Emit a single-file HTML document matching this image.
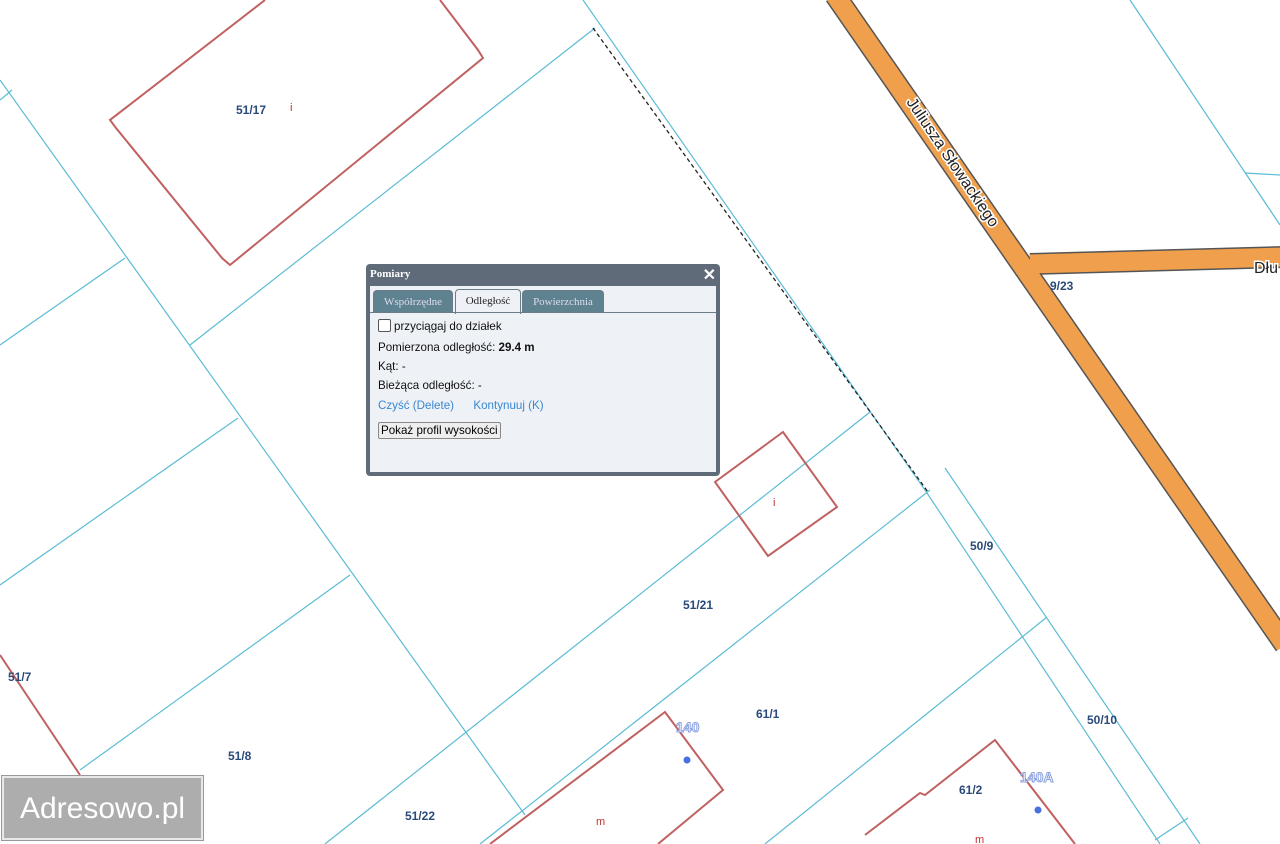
<!DOCTYPE html>
<html><head><meta charset="utf-8"><style>
body{margin:0;width:1280px;height:844px;overflow:hidden;background:#fff;font-family:"Liberation Sans",sans-serif;position:relative}
svg{position:absolute;left:0;top:0}
.lbl{font:bold 12px "Liberation Sans",sans-serif;fill:#2a4a7a}
#dlg{position:absolute;left:366px;top:264px;width:354px;height:212px;background:#5f6b78;border-radius:4px;box-sizing:border-box}
#dlg .t{position:absolute;left:4px;top:4px;color:#fff;font:bold 11px "Liberation Serif",serif}
#dlg .x{position:absolute;right:4px;top:1px;color:#fff;font:bold 16px "Liberation Sans",sans-serif}
#dlg .body{position:absolute;left:4px;top:22px;width:346px;height:186px;background:#eef2f7}
.tab{position:absolute;top:4px;height:22px;border:1px solid #6a7c88;border-bottom:none;border-radius:4px 4px 0 0;font:11px "Liberation Serif",serif;line-height:22px;text-align:center;background:#5f8290;color:#dde}
.tab.a{background:#eef2f7;color:#222;height:24px;top:3px}
.line{position:absolute;left:0;top:26px;width:346px;border-top:1px solid #6a7c88}
.c{position:absolute;left:8px;font-size:11.6px;color:#111}
a{color:#3a86d0;text-decoration:none}
.btn{position:absolute;left:8px;top:136px;border:1px solid #888;background:#eee;font-size:11.6px;padding:1px 2px;border-radius:2px}
#logo{position:absolute;left:2px;top:776px;width:201px;height:64px;background:#adadad;border:2px solid #e8e8e8;box-sizing:border-box;outline:1px solid #999;color:#fff;font:30px "Liberation Sans",sans-serif;line-height:62px;text-align:center}
</style></head><body>
<svg width="1280" height="844" viewBox="0 0 1280 844">
<g stroke="#5bbcd6" stroke-width="1.2" fill="none">
<line x1="0" y1="80" x2="525" y2="815"/>
<line x1="583" y1="0" x2="925" y2="490"/>
<line x1="925" y1="490" x2="1160" y2="844"/>
<line x1="945" y1="468" x2="1200" y2="844"/>
<line x1="190" y1="345" x2="595" y2="28"/>
<line x1="0" y1="345" x2="125" y2="258"/>
<line x1="0" y1="585" x2="238" y2="418"/>
<line x1="80" y1="770" x2="350" y2="575"/>
<line x1="325" y1="844" x2="870" y2="412"/>
<line x1="480" y1="844" x2="930" y2="490"/>
<line x1="765" y1="844" x2="1047" y2="617"/>
<line x1="1155" y1="840" x2="1188" y2="818"/>
<line x1="1130" y1="0" x2="1280" y2="225"/>
<line x1="1245" y1="173" x2="1280" y2="175"/>
<line x1="0" y1="100" x2="12" y2="90"/>
</g>
<line x1="593" y1="28" x2="928" y2="492" stroke="#222" stroke-width="1.3" stroke-dasharray="4,3"/>
<g stroke="#c06060" stroke-width="2" fill="none">
<polyline points="265,0 110,120 116,128 222,258 230,265 483,58 478,50 440,0"/>
<polygon points="715,482 783,432 837,507 768,556"/>
<polyline points="490,844 665,712 723,790 658,844"/>
<polyline points="865,835 920,793 925,795 995,740 1075,844"/>
<line x1="0" y1="655" x2="80" y2="775"/>
</g>
<g stroke="#555" stroke-width="22"><line x1="835" y1="-5" x2="1285" y2="645"/><line x1="1030" y1="264" x2="1285" y2="257"/></g>
<g stroke="#f0a04c" stroke-width="19"><line x1="835" y1="-5" x2="1285" y2="645"/><line x1="1030" y1="264" x2="1285" y2="257"/></g>
<text x="0" y="0" transform="translate(906,102) rotate(56)" font-size="16" fill="#222" stroke="#fff" stroke-width="3" paint-order="stroke">Juliusza Słowackiego</text>
<text x="1254" y="273" font-size="16" fill="#222" stroke="#fff" stroke-width="3" paint-order="stroke">Dłu</text>
<text x="1050" y="290" class="lbl">9/23</text>
<text x="236" y="114" class="lbl">51/17</text>
<text x="290" y="111" font-size="11" fill="#c03030">i</text>
<text x="773" y="506" font-size="11" fill="#c03030">i</text>
<text x="970" y="550" class="lbl">50/9</text>
<text x="683" y="609" class="lbl">51/21</text>
<text x="8" y="681" class="lbl">51/7</text>
<text x="756" y="718" class="lbl">61/1</text>
<text x="1087" y="724" class="lbl">50/10</text>
<text x="228" y="760" class="lbl">51/8</text>
<text x="959" y="794" class="lbl">61/2</text>
<text x="405" y="820" class="lbl">51/22</text>
<text x="596" y="825" font-size="11" fill="#c03030">m</text>
<text x="975" y="843" font-size="11" fill="#c03030">m</text>
<text x="676" y="732" font-size="14" font-weight="bold" fill="#fff" stroke="#8aa0e0" stroke-width="1">140</text>
<text x="1020" y="782" font-size="14" font-weight="bold" fill="#fff" stroke="#8aa0e0" stroke-width="1">140A</text>
<circle cx="687" cy="760" r="3.5" fill="#4a70e0"/>
<circle cx="1038" cy="810" r="3.5" fill="#4a70e0"/>
</svg>
<div id="dlg"><div class="t">Pomiary</div><div class="x">✕</div>
<div class="body">
<div class="tab" style="left:3px;width:78px">Współrzędne</div>
<div class="tab a" style="left:85px;width:64px">Odległość</div>
<div class="tab" style="left:152px;width:80px">Powierzchnia</div>
<div class="line"></div>
<div class="c" style="top:33px"><span style="display:inline-block;width:11px;height:11px;border:1px solid #555;border-radius:2px;background:#fff;vertical-align:-2px;margin-right:3px"></span>przyciągaj do działek</div>
<div class="c" style="top:55px">Pomierzona odległość: <b>29.4 m</b></div>
<div class="c" style="top:74px">Kąt: -</div>
<div class="c" style="top:93px">Bieżąca odległość: -</div>
<div class="c" style="top:113px"><a>Czyść (Delete)</a>&nbsp;&nbsp;&nbsp;&nbsp;&nbsp;&nbsp;<a>Kontynuuj (K)</a></div>
<div class="btn">Pokaż profil wysokości</div>
</div></div>
<div id="logo">Adresowo.pl</div>
</body></html>
